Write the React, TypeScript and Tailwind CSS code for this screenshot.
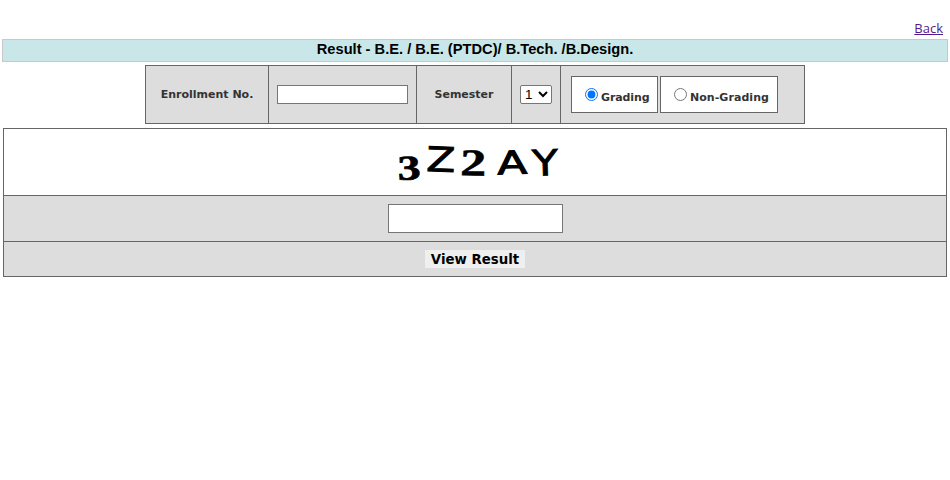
const label = "whitespace-nowrap font-['DejaVu_Sans',sans-serif] text-[11px] leading-[14px] font-bold text-[#333333]";

function Captcha() {
  return (
    <svg width="200" height="66" viewBox="380 129 200 66" className="block" aria-label="Captcha">
      <g fill="#000">
        <text transform="translate(398 180) rotate(-2)" fontFamily="'Liberation Serif', serif" fontWeight="700" fontSize="35" stroke="#000" strokeWidth="0.7" textLength="23" lengthAdjust="spacingAndGlyphs">3</text>
        <text transform="translate(426 171) rotate(2)" fontFamily="'DejaVu Sans', sans-serif" fontSize="34" stroke="#000" strokeWidth="0.9" textLength="29" lengthAdjust="spacingAndGlyphs">Z</text>
        <text transform="translate(460 175.3) rotate(1)" fontFamily="'Liberation Serif', serif" fontWeight="700" fontSize="38" stroke="#000" strokeWidth="0.5" textLength="26" lengthAdjust="spacingAndGlyphs">2</text>
        <text transform="translate(497.5 174.5) rotate(-2)" fontFamily="'DejaVu Sans', sans-serif" fontSize="32" stroke="#000" strokeWidth="1" textLength="30" lengthAdjust="spacingAndGlyphs">A</text>
        <text transform="translate(532.5 176) rotate(-2)" fontFamily="'DejaVu Sans', sans-serif" fontSize="36" stroke="#000" strokeWidth="0.8" textLength="26" lengthAdjust="spacingAndGlyphs">Y</text>
      </g>
    </svg>
  );
}

export default function App() {
  return (
    <div className="h-[480px] w-[950px] overflow-hidden bg-white">
      <div className="flex h-[39px] justify-end pt-[19px] pr-[7px]">
        <a href="#" className="font-['Open_Sans',sans-serif] text-[13px] leading-[18px] text-[#551a8b] underline">Back</a>
      </div>
      <div className="mx-[2px] flex h-[23px] justify-center border border-[#c8c8c8] bg-[#c9e7e9] font-['Liberation_Sans',Arial,sans-serif] text-[14.67px] leading-[18px] font-bold text-black">
        <span className="whitespace-nowrap">Result - B.E. / B.E. (PTDC)/ B.Tech. /B.Design.</span>
      </div>
      <div className="mx-auto mt-[3px] grid h-[59px] w-[660px] grid-cols-[122px_147px_94px_48px_243px] gap-px border border-[#666666] bg-[#666666]">
        <div className="flex items-center justify-center bg-[#dddddd]">
          <span className={label}>Enrollment No.</span>
        </div>
        <div className="flex items-center justify-center bg-[#dddddd]">
          <input type="text" aria-label="Enrollment number" className="h-[19px] w-[131px] border border-[#767676] bg-white" />
        </div>
        <div className="flex items-center justify-center bg-[#dddddd]">
          <span className={label}>Semester</span>
        </div>
        <div className="flex items-center justify-center bg-[#dddddd]">
          <select aria-label="Semester" className="h-[19px] w-8 rounded-[2px] border border-[#767676] bg-white font-['Liberation_Sans',Arial,sans-serif] text-[13.333px] text-black">
            <option>1</option>
          </select>
        </div>
        <div className="flex gap-[2px] bg-[#dddddd] pt-[10px] pl-[10px]">
          <label className="flex h-[37px] w-[87px] border border-[#666666] bg-white pt-[11px] pl-[13px]">
            <input type="radio" name="scheme" defaultChecked className="h-[13px] w-[13px] shrink-0" />
            <span className={`${label} mt-[3px] ml-[3px] tracking-[-0.1px]`}>Grading</span>
          </label>
          <label className="flex h-[37px] w-[118px] border border-[#666666] bg-white pt-[11px] pl-[13px]">
            <input type="radio" name="scheme" className="h-[13px] w-[13px] shrink-0" />
            <span className={`${label} mt-[3px] ml-[3px] tracking-[0.05px]`}>Non-Grading</span>
          </label>
        </div>
      </div>
      <div className="mx-[3px] mt-1 grid h-[149px] grid-rows-[66px_45px_34px] gap-px border border-[#666666] bg-[#666666]">
        <div className="flex justify-center bg-white pl-[10px]">
          <Captcha />
        </div>
        <div className="flex items-center justify-center bg-[#dddddd]">
          <input type="text" aria-label="Captcha text" className="h-[29px] w-[175px] border border-[#767676] bg-white" />
        </div>
        <div className="flex items-center justify-center bg-[#dddddd]">
          <button className="h-[18px] w-[100px] bg-[#efefef] pt-px font-['DejaVu_Sans',sans-serif] text-[13.333px] leading-[17px] font-bold whitespace-nowrap text-black">View Result</button>
        </div>
      </div>
    </div>
  );
}
